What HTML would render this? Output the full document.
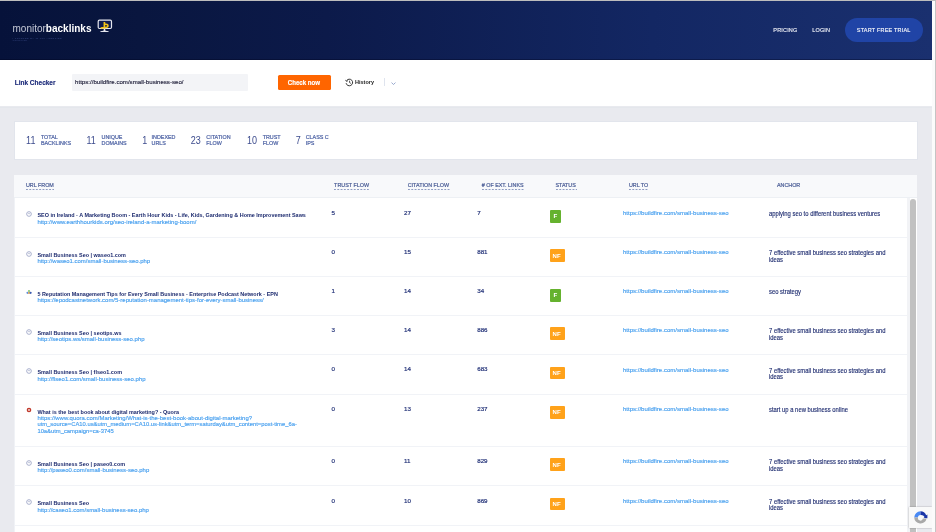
<!DOCTYPE html>
<html><head><meta charset="utf-8"><style>
*{margin:0;padding:0;box-sizing:border-box}
html,body{width:936px;height:532px;overflow:hidden;background:#e9eaef;font-family:"Liberation Sans",sans-serif}
.t{position:absolute;white-space:nowrap;line-height:1}
.a{position:absolute}
</style></head><body><div id="root" style="position:absolute;left:0;top:0;width:936px;height:532px;overflow:hidden;will-change:transform">
<div class="a" style="left:0;top:0;width:936px;height:1px;background:#bdbdbd"></div>
<div class="a" style="left:0;top:1px;width:932px;height:59px;background:linear-gradient(90deg,#06123a 0%,#09163f 15%,#0c1a4a 35%,#132763 70%,#1a306f 100%)"></div>
<div class="a" style="left:0;top:58.6px;width:932px;height:1.4px;background:rgba(0,4,30,.35)"></div>
<div class="t" style="left:12.50px;top:23.93px;font-size:10px;color:#fff;font-weight:400;"><span style="color:#c4c8d6">monitor</span><span style="font-weight:700;color:#fff">backlinks</span></div>

<div class="t" style="left:12.50px;top:37.45px;font-size:2.3px;color:#3d4d88;font-weight:400;letter-spacing:0.5px">I TRUSTED BY 11,000 AGENCIES</div>

<div class="t" style="left:12.50px;top:39.59px;font-size:1.9px;color:#34447e;font-weight:400;letter-spacing:0.3px">WORLDWIDE</div>

<svg class="a" style="left:97px;top:19px" width="16" height="14" viewBox="0 0 16 14">
<rect x="1.2" y="1.2" width="13.3" height="8.3" rx="1.2" fill="#0e1d50" stroke="#e6e7ee" stroke-width="1.2"/>
<path d="M6.9 9.6 L8.1 9.6 L8.5 11.7 L11.6 12.2 L11.6 12.9 L3.4 12.9 L3.4 12.2 L6.5 11.7 Z" fill="#e6e7ee"/>
<path d="M7.4 3.0 L7.4 8.7 M7.4 5.5 C 12.0 4.2, 12.2 9.0, 7.4 8.7 L 3.6 9.0" stroke="#f2c318" stroke-width="1.7" fill="none"/>
</svg>
<div class="t" style="left:773.30px;top:27.84px;font-size:5.5px;color:#e8ebf3;font-weight:400;letter-spacing:0.18px;-webkit-text-stroke:0.15px #e8ebf3">PRICING</div>

<div class="t" style="left:812.20px;top:27.84px;font-size:5.5px;color:#e8ebf3;font-weight:400;letter-spacing:0.18px;-webkit-text-stroke:0.15px #e8ebf3">LOGIN</div>

<div class="a" style="left:845px;top:18.3px;width:78px;height:23.6px;border-radius:12px;background:#2044a6"></div>
<div class="t" style="left:856.80px;top:27.84px;font-size:5.5px;color:#f2f4fa;font-weight:400;letter-spacing:0.2px;-webkit-text-stroke:0.15px #f2f4fa">START FREE TRIAL</div>

<div class="a" style="left:0;top:60px;width:932px;height:46px;background:#fff"></div>
<div class="t" style="left:14.70px;top:79.50px;font-size:6.5px;color:#1a2978;font-weight:700;transform:scaleY(1.12);transform-origin:0 5.50px;-webkit-text-stroke:0.12px #1a2978">Link Checker</div>

<div class="a" style="left:72px;top:74px;width:176px;height:16.5px;background:#f3f4f7;border-radius:1px"></div>
<div class="t" style="left:75.10px;top:78.84px;font-size:6.1px;color:#25253f;font-weight:400;-webkit-text-stroke:0.15px #25253f">https://buildfire.com/small-business-seo/</div>

<div class="a" style="left:277.6px;top:74.8px;width:53.2px;height:15.7px;background:#ff6500;border-radius:1.5px"></div>
<div class="t" style="left:287.80px;top:80.04px;font-size:6.1px;color:#fff;font-weight:700;transform:scaleY(1.25);transform-origin:0 5.16px;-webkit-text-stroke:0.15px #fff">Check now</div>

<svg class="a" style="left:345px;top:78px" width="9" height="9" viewBox="0 0 9 9">
<path d="M1.6 2.6 A3.3 3.3 0 1 1 1.1 5.2" fill="none" stroke="#2a2a2a" stroke-width="0.95"/>
<path d="M0.5 1.9 L1.5 3.4 L3.0 2.6" fill="none" stroke="#2a2a2a" stroke-width="0.85"/>
<path d="M4.6 2.7 L4.6 4.6 L5.8 5.4" fill="none" stroke="#2a2a2a" stroke-width="0.85"/>
</svg>
<div class="t" style="left:355.00px;top:80.34px;font-size:5.5px;color:#222;font-weight:700;transform:scaleY(1.1);transform-origin:0 4.66px;">History</div>

<div class="a" style="left:384px;top:78.4px;width:1px;height:8px;background:#dfe4ee"></div>
<svg class="a" style="left:390.5px;top:82.3px" width="5" height="3.4" viewBox="0 0 5 3.4"><path d="M0.5 0.6 L2.5 2.5 L4.5 0.6" fill="none" stroke="#7f93c2" stroke-width="0.8"/></svg>
<div class="a" style="left:0;top:107px;width:932px;height:1px;background:#e4e7ec"></div>
<div class="a" style="left:13.5px;top:121px;width:904.5px;height:38.5px;background:#fff;border:1px solid #e2e5ec"></div>
<div class="t" style="left:26.10px;top:136.88px;font-size:9px;color:#3c4b8d;font-weight:400;transform:scaleY(1.12);transform-origin:0 7.62px;">11</div>

<div class="t" style="left:40.90px;top:135.23px;font-size:5.4px;color:#4e63a4;font-weight:400;-webkit-text-stroke:0.2px #4e63a4">TOTAL</div>

<div class="t" style="left:40.90px;top:141.03px;font-size:5.4px;color:#4e63a4;font-weight:400;-webkit-text-stroke:0.2px #4e63a4">BACKLINKS</div>

<div class="t" style="left:86.40px;top:136.88px;font-size:9px;color:#3c4b8d;font-weight:400;transform:scaleY(1.12);transform-origin:0 7.62px;">11</div>

<div class="t" style="left:101.50px;top:135.23px;font-size:5.4px;color:#4e63a4;font-weight:400;-webkit-text-stroke:0.2px #4e63a4">UNIQUE</div>

<div class="t" style="left:101.50px;top:141.03px;font-size:5.4px;color:#4e63a4;font-weight:400;-webkit-text-stroke:0.2px #4e63a4">DOMAINS</div>

<div class="t" style="left:142.20px;top:136.88px;font-size:9px;color:#3c4b8d;font-weight:400;transform:scaleY(1.12);transform-origin:0 7.62px;">1</div>

<div class="t" style="left:151.50px;top:135.23px;font-size:5.4px;color:#4e63a4;font-weight:400;-webkit-text-stroke:0.2px #4e63a4">INDEXED</div>

<div class="t" style="left:151.50px;top:141.03px;font-size:5.4px;color:#4e63a4;font-weight:400;-webkit-text-stroke:0.2px #4e63a4">URLS</div>

<div class="t" style="left:190.80px;top:136.88px;font-size:9px;color:#3c4b8d;font-weight:400;transform:scaleY(1.12);transform-origin:0 7.62px;">23</div>

<div class="t" style="left:206.30px;top:135.23px;font-size:5.4px;color:#4e63a4;font-weight:400;-webkit-text-stroke:0.2px #4e63a4">CITATION</div>

<div class="t" style="left:206.30px;top:141.03px;font-size:5.4px;color:#4e63a4;font-weight:400;-webkit-text-stroke:0.2px #4e63a4">FLOW</div>

<div class="t" style="left:246.90px;top:136.88px;font-size:9px;color:#3c4b8d;font-weight:400;transform:scaleY(1.12);transform-origin:0 7.62px;">10</div>

<div class="t" style="left:262.70px;top:135.23px;font-size:5.4px;color:#4e63a4;font-weight:400;-webkit-text-stroke:0.2px #4e63a4">TRUST</div>

<div class="t" style="left:262.70px;top:141.03px;font-size:5.4px;color:#4e63a4;font-weight:400;-webkit-text-stroke:0.2px #4e63a4">FLOW</div>

<div class="t" style="left:295.80px;top:136.88px;font-size:9px;color:#3c4b8d;font-weight:400;transform:scaleY(1.12);transform-origin:0 7.62px;">7</div>

<div class="t" style="left:305.70px;top:135.23px;font-size:5.4px;color:#4e63a4;font-weight:400;-webkit-text-stroke:0.2px #4e63a4">CLASS C</div>

<div class="t" style="left:305.70px;top:141.03px;font-size:5.4px;color:#4e63a4;font-weight:400;-webkit-text-stroke:0.2px #4e63a4">IPS</div>

<div class="a" style="left:14px;top:175px;width:903px;height:360px;background:#fff"></div>
<div class="a" style="left:14px;top:175px;width:903px;height:23px;background:#f8f9fb;border-bottom:1px solid #edf0f4"></div>
<div class="t" style="left:25.90px;top:183.03px;font-size:5.4px;color:#4a5d96;font-weight:400;-webkit-text-stroke:0.2px #4a5d96">URL FROM</div>

<svg class="a" style="left:26.2px;top:189px" width="28.0" height="1.4"><line x1="0" y1="0.7" x2="28.0" y2="0.7" stroke="#7586b4" stroke-width="1" stroke-dasharray="1.9 1.4"/></svg>
<div class="t" style="left:334.10px;top:183.03px;font-size:5.4px;color:#4a5d96;font-weight:400;-webkit-text-stroke:0.2px #4a5d96">TRUST FLOW</div>

<svg class="a" style="left:334.4px;top:189px" width="34.8" height="1.4"><line x1="0" y1="0.7" x2="34.8" y2="0.7" stroke="#7586b4" stroke-width="1" stroke-dasharray="1.9 1.4"/></svg>
<div class="t" style="left:407.70px;top:183.03px;font-size:5.4px;color:#4a5d96;font-weight:400;-webkit-text-stroke:0.2px #4a5d96">CITATION FLOW</div>

<svg class="a" style="left:408.0px;top:189px" width="42.6" height="1.4"><line x1="0" y1="0.7" x2="42.6" y2="0.7" stroke="#7586b4" stroke-width="1" stroke-dasharray="1.9 1.4"/></svg>
<div class="t" style="left:481.70px;top:183.03px;font-size:5.4px;color:#4a5d96;font-weight:400;-webkit-text-stroke:0.2px #4a5d96"># OF EXT. LINKS</div>

<svg class="a" style="left:482.0px;top:189px" width="42.7" height="1.4"><line x1="0" y1="0.7" x2="42.7" y2="0.7" stroke="#7586b4" stroke-width="1" stroke-dasharray="1.9 1.4"/></svg>
<div class="t" style="left:555.40px;top:183.03px;font-size:5.4px;color:#4a5d96;font-weight:400;-webkit-text-stroke:0.2px #4a5d96">STATUS</div>

<svg class="a" style="left:555.7px;top:189px" width="21.6" height="1.4"><line x1="0" y1="0.7" x2="21.6" y2="0.7" stroke="#7586b4" stroke-width="1" stroke-dasharray="1.9 1.4"/></svg>
<div class="t" style="left:628.90px;top:183.03px;font-size:5.4px;color:#4a5d96;font-weight:400;-webkit-text-stroke:0.2px #4a5d96">URL TO</div>

<svg class="a" style="left:629.2px;top:189px" width="19.6" height="1.4"><line x1="0" y1="0.7" x2="19.6" y2="0.7" stroke="#7586b4" stroke-width="1" stroke-dasharray="1.9 1.4"/></svg>
<div class="t" style="left:776.90px;top:183.03px;font-size:5.4px;color:#4a5d96;font-weight:400;-webkit-text-stroke:0.2px #4a5d96">ANCHOR</div>

<div class="a" style="left:14px;top:237.0px;width:893px;height:1px;background:#f1f3f7"></div>
<svg class="a" style="left:26px;top:211.2px" width="6" height="6" viewBox="0 0 6 6"><circle cx="3" cy="3" r="2.35" fill="none" stroke="#8f98bd" stroke-width="0.75"/><path d="M1.6 2.3 L3 1.7 L4.3 2.5 L3.1 3.5 Z" fill="#c3c8dc"/></svg>
<div class="t" style="left:37.40px;top:213.49px;font-size:5.45px;color:#1c2a6e;font-weight:700;transform:scaleY(1.1);transform-origin:0 4.61px;">SEO in Ireland - A Marketing Boom - Earth Hour Kids - Life, Kids, Gardening &amp; Home Improvement Saws</div>

<div class="t" style="left:37.40px;top:218.84px;font-size:5.98px;color:#4aa1ef;font-weight:400;-webkit-text-stroke:0.15px #4aa1ef">http://www.earthhourkids.org/seo-ireland-a-marketing-boom/</div>

<div class="t" style="left:331.60px;top:209.65px;font-size:6.2px;color:#26357a;font-weight:400;-webkit-text-stroke:0.2px #26357a">5</div>

<div class="t" style="left:404.00px;top:209.65px;font-size:6.2px;color:#26357a;font-weight:400;-webkit-text-stroke:0.2px #26357a">27</div>

<div class="t" style="left:477.20px;top:209.65px;font-size:6.2px;color:#26357a;font-weight:400;-webkit-text-stroke:0.2px #26357a">7</div>

<div class="a" style="left:550px;top:210.0px;width:11px;height:13.4px;background:#65b22e;border-radius:1px"></div>
<div class="t" style="left:553.60px;top:213.35px;font-size:6.2px;color:#fff;font-weight:700;">F</div>

<div class="t" style="left:623.00px;top:209.89px;font-size:6.04px;color:#4aa1ef;font-weight:400;-webkit-text-stroke:0.15px #4aa1ef">https://buildfire.com/small-business-seo</div>

<div class="t" style="left:769.00px;top:211.72px;font-size:5.88px;color:#1f2d70;font-weight:400;transform:scaleY(1.15);transform-origin:0 4.98px;-webkit-text-stroke:0.12px #1f2d70">applying seo to different business ventures</div>

<div class="a" style="left:14px;top:276.0px;width:893px;height:1px;background:#f1f3f7"></div>
<svg class="a" style="left:26px;top:250.7px" width="6" height="6" viewBox="0 0 6 6"><circle cx="3" cy="3" r="2.35" fill="none" stroke="#8f98bd" stroke-width="0.75"/><path d="M1.6 2.3 L3 1.7 L4.3 2.5 L3.1 3.5 Z" fill="#c3c8dc"/></svg>
<div class="t" style="left:37.40px;top:252.99px;font-size:5.45px;color:#1c2a6e;font-weight:700;transform:scaleY(1.1);transform-origin:0 4.61px;">Small Business Seo | waseo1.com</div>

<div class="t" style="left:37.40px;top:258.34px;font-size:5.98px;color:#4aa1ef;font-weight:400;-webkit-text-stroke:0.15px #4aa1ef">http://waseo1.com/small-business-seo.php</div>

<div class="t" style="left:331.60px;top:249.15px;font-size:6.2px;color:#26357a;font-weight:400;-webkit-text-stroke:0.2px #26357a">0</div>

<div class="t" style="left:404.00px;top:249.15px;font-size:6.2px;color:#26357a;font-weight:400;-webkit-text-stroke:0.2px #26357a">15</div>

<div class="t" style="left:477.20px;top:249.15px;font-size:6.2px;color:#26357a;font-weight:400;-webkit-text-stroke:0.2px #26357a">881</div>

<div class="a" style="left:550.3px;top:249.3px;width:14.7px;height:12.8px;background:#ffa21a;border-radius:1px"></div>
<div class="t" style="left:552.60px;top:252.62px;font-size:6.0px;color:#fff;font-weight:700;">NF</div>

<div class="t" style="left:623.00px;top:249.39px;font-size:6.04px;color:#4aa1ef;font-weight:400;-webkit-text-stroke:0.15px #4aa1ef">https://buildfire.com/small-business-seo</div>

<div class="t" style="left:769.00px;top:251.22px;font-size:5.88px;color:#1f2d70;font-weight:400;transform:scaleY(1.15);transform-origin:0 4.98px;-webkit-text-stroke:0.12px #1f2d70">7 effective small business seo strategies and</div>

<div class="t" style="left:769.00px;top:257.62px;font-size:5.88px;color:#1f2d70;font-weight:400;transform:scaleY(1.15);transform-origin:0 4.98px;-webkit-text-stroke:0.12px #1f2d70">ideas</div>

<div class="a" style="left:14px;top:314.9px;width:893px;height:1px;background:#f1f3f7"></div>
<svg class="a" style="left:26px;top:288.8px" width="6" height="6" viewBox="0 0 6 6"><circle cx="1.5" cy="3.8" r="1.1" fill="#5a8ee0"/><circle cx="3" cy="2" r="1" fill="#7cc36a"/><circle cx="3" cy="4" r="1" fill="#f0a040"/><circle cx="4.6" cy="3.8" r="1.1" fill="#3a5ab0"/></svg>
<div class="t" style="left:37.40px;top:291.99px;font-size:5.45px;color:#1c2a6e;font-weight:700;transform:scaleY(1.1);transform-origin:0 4.61px;">5 Reputation Management Tips for Every Small Business - Enterprise Podcast Network - EPN</div>

<div class="t" style="left:37.40px;top:297.34px;font-size:5.98px;color:#4aa1ef;font-weight:400;-webkit-text-stroke:0.15px #4aa1ef">https://epodcastnetwork.com/5-reputation-management-tips-for-every-small-business/</div>

<div class="t" style="left:331.60px;top:288.15px;font-size:6.2px;color:#26357a;font-weight:400;-webkit-text-stroke:0.2px #26357a">1</div>

<div class="t" style="left:404.00px;top:288.15px;font-size:6.2px;color:#26357a;font-weight:400;-webkit-text-stroke:0.2px #26357a">14</div>

<div class="t" style="left:477.20px;top:288.15px;font-size:6.2px;color:#26357a;font-weight:400;-webkit-text-stroke:0.2px #26357a">34</div>

<div class="a" style="left:550px;top:288.5px;width:11px;height:13.4px;background:#65b22e;border-radius:1px"></div>
<div class="t" style="left:553.60px;top:291.85px;font-size:6.2px;color:#fff;font-weight:700;">F</div>

<div class="t" style="left:623.00px;top:288.39px;font-size:6.04px;color:#4aa1ef;font-weight:400;-webkit-text-stroke:0.15px #4aa1ef">https://buildfire.com/small-business-seo</div>

<div class="t" style="left:769.00px;top:290.22px;font-size:5.88px;color:#1f2d70;font-weight:400;transform:scaleY(1.15);transform-origin:0 4.98px;-webkit-text-stroke:0.12px #1f2d70">seo strategy</div>

<div class="a" style="left:14px;top:354.3px;width:893px;height:1px;background:#f1f3f7"></div>
<svg class="a" style="left:26px;top:328.6px" width="6" height="6" viewBox="0 0 6 6"><circle cx="3" cy="3" r="2.35" fill="none" stroke="#8f98bd" stroke-width="0.75"/><path d="M1.6 2.3 L3 1.7 L4.3 2.5 L3.1 3.5 Z" fill="#c3c8dc"/></svg>
<div class="t" style="left:37.40px;top:330.89px;font-size:5.45px;color:#1c2a6e;font-weight:700;transform:scaleY(1.1);transform-origin:0 4.61px;">Small Business Seo | seotips.ws</div>

<div class="t" style="left:37.40px;top:336.24px;font-size:5.98px;color:#4aa1ef;font-weight:400;-webkit-text-stroke:0.15px #4aa1ef">http://seotips.ws/small-business-seo.php</div>

<div class="t" style="left:331.60px;top:327.05px;font-size:6.2px;color:#26357a;font-weight:400;-webkit-text-stroke:0.2px #26357a">3</div>

<div class="t" style="left:404.00px;top:327.05px;font-size:6.2px;color:#26357a;font-weight:400;-webkit-text-stroke:0.2px #26357a">14</div>

<div class="t" style="left:477.20px;top:327.05px;font-size:6.2px;color:#26357a;font-weight:400;-webkit-text-stroke:0.2px #26357a">886</div>

<div class="a" style="left:550.3px;top:327.2px;width:14.7px;height:12.8px;background:#ffa21a;border-radius:1px"></div>
<div class="t" style="left:552.60px;top:330.52px;font-size:6.0px;color:#fff;font-weight:700;">NF</div>

<div class="t" style="left:623.00px;top:327.29px;font-size:6.04px;color:#4aa1ef;font-weight:400;-webkit-text-stroke:0.15px #4aa1ef">https://buildfire.com/small-business-seo</div>

<div class="t" style="left:769.00px;top:329.12px;font-size:5.88px;color:#1f2d70;font-weight:400;transform:scaleY(1.15);transform-origin:0 4.98px;-webkit-text-stroke:0.12px #1f2d70">7 effective small business seo strategies and</div>

<div class="t" style="left:769.00px;top:335.52px;font-size:5.88px;color:#1f2d70;font-weight:400;transform:scaleY(1.15);transform-origin:0 4.98px;-webkit-text-stroke:0.12px #1f2d70">ideas</div>

<div class="a" style="left:14px;top:393.8px;width:893px;height:1px;background:#f1f3f7"></div>
<svg class="a" style="left:26px;top:368.0px" width="6" height="6" viewBox="0 0 6 6"><circle cx="3" cy="3" r="2.35" fill="none" stroke="#8f98bd" stroke-width="0.75"/><path d="M1.6 2.3 L3 1.7 L4.3 2.5 L3.1 3.5 Z" fill="#c3c8dc"/></svg>
<div class="t" style="left:37.40px;top:370.29px;font-size:5.45px;color:#1c2a6e;font-weight:700;transform:scaleY(1.1);transform-origin:0 4.61px;">Small Business Seo | flseo1.com</div>

<div class="t" style="left:37.40px;top:375.64px;font-size:5.98px;color:#4aa1ef;font-weight:400;-webkit-text-stroke:0.15px #4aa1ef">http://flseo1.com/small-business-seo.php</div>

<div class="t" style="left:331.60px;top:366.45px;font-size:6.2px;color:#26357a;font-weight:400;-webkit-text-stroke:0.2px #26357a">0</div>

<div class="t" style="left:404.00px;top:366.45px;font-size:6.2px;color:#26357a;font-weight:400;-webkit-text-stroke:0.2px #26357a">14</div>

<div class="t" style="left:477.20px;top:366.45px;font-size:6.2px;color:#26357a;font-weight:400;-webkit-text-stroke:0.2px #26357a">683</div>

<div class="a" style="left:550.3px;top:366.6px;width:14.7px;height:12.8px;background:#ffa21a;border-radius:1px"></div>
<div class="t" style="left:552.60px;top:369.92px;font-size:6.0px;color:#fff;font-weight:700;">NF</div>

<div class="t" style="left:623.00px;top:366.69px;font-size:6.04px;color:#4aa1ef;font-weight:400;-webkit-text-stroke:0.15px #4aa1ef">https://buildfire.com/small-business-seo</div>

<div class="t" style="left:769.00px;top:368.52px;font-size:5.88px;color:#1f2d70;font-weight:400;transform:scaleY(1.15);transform-origin:0 4.98px;-webkit-text-stroke:0.12px #1f2d70">7 effective small business seo strategies and</div>

<div class="t" style="left:769.00px;top:374.92px;font-size:5.88px;color:#1f2d70;font-weight:400;transform:scaleY(1.15);transform-origin:0 4.98px;-webkit-text-stroke:0.12px #1f2d70">ideas</div>

<div class="a" style="left:14px;top:446.0px;width:893px;height:1px;background:#f1f3f7"></div>
<svg class="a" style="left:26px;top:406.7px" width="6" height="6" viewBox="0 0 6 6"><circle cx="3" cy="3" r="2.3" fill="#c0392b"/><circle cx="3" cy="2.9" r="1.0" fill="#f3d5d3"/></svg>
<div class="t" style="left:37.40px;top:409.79px;font-size:5.45px;color:#1c2a6e;font-weight:700;transform:scaleY(1.1);transform-origin:0 4.61px;">What is the best book about digital marketing? - Quora</div>

<div class="t" style="left:37.40px;top:415.14px;font-size:5.98px;color:#4aa1ef;font-weight:400;-webkit-text-stroke:0.15px #4aa1ef">https://www.quora.com/Marketing/What-is-the-best-book-about-digital-marketing?</div>

<div class="t" style="left:37.40px;top:422.06px;font-size:5.84px;color:#4aa1ef;font-weight:400;-webkit-text-stroke:0.15px #4aa1ef">utm_source=CA10.us&amp;utm_medium=CA10.us-link&amp;utm_term=saturday&amp;utm_content=post-time_6a-</div>

<div class="t" style="left:37.40px;top:428.86px;font-size:5.84px;color:#4aa1ef;font-weight:400;-webkit-text-stroke:0.15px #4aa1ef">10a&amp;utm_campaign=ca-3745</div>

<div class="t" style="left:331.60px;top:405.95px;font-size:6.2px;color:#26357a;font-weight:400;-webkit-text-stroke:0.2px #26357a">0</div>

<div class="t" style="left:404.00px;top:405.95px;font-size:6.2px;color:#26357a;font-weight:400;-webkit-text-stroke:0.2px #26357a">13</div>

<div class="t" style="left:477.20px;top:405.95px;font-size:6.2px;color:#26357a;font-weight:400;-webkit-text-stroke:0.2px #26357a">237</div>

<div class="a" style="left:550.3px;top:406.1px;width:14.7px;height:12.8px;background:#ffa21a;border-radius:1px"></div>
<div class="t" style="left:552.60px;top:409.42px;font-size:6.0px;color:#fff;font-weight:700;">NF</div>

<div class="t" style="left:623.00px;top:406.19px;font-size:6.04px;color:#4aa1ef;font-weight:400;-webkit-text-stroke:0.15px #4aa1ef">https://buildfire.com/small-business-seo</div>

<div class="t" style="left:769.00px;top:408.02px;font-size:5.88px;color:#1f2d70;font-weight:400;transform:scaleY(1.15);transform-origin:0 4.98px;-webkit-text-stroke:0.12px #1f2d70">start up a new business online</div>

<div class="a" style="left:14px;top:485.4px;width:893px;height:1px;background:#f1f3f7"></div>
<svg class="a" style="left:26px;top:459.7px" width="6" height="6" viewBox="0 0 6 6"><circle cx="3" cy="3" r="2.35" fill="none" stroke="#8f98bd" stroke-width="0.75"/><path d="M1.6 2.3 L3 1.7 L4.3 2.5 L3.1 3.5 Z" fill="#c3c8dc"/></svg>
<div class="t" style="left:37.40px;top:461.99px;font-size:5.45px;color:#1c2a6e;font-weight:700;transform:scaleY(1.1);transform-origin:0 4.61px;">Small Business Seo | paseo0.com</div>

<div class="t" style="left:37.40px;top:467.34px;font-size:5.98px;color:#4aa1ef;font-weight:400;-webkit-text-stroke:0.15px #4aa1ef">http://paseo0.com/small-business-seo.php</div>

<div class="t" style="left:331.60px;top:458.15px;font-size:6.2px;color:#26357a;font-weight:400;-webkit-text-stroke:0.2px #26357a">0</div>

<div class="t" style="left:404.00px;top:458.15px;font-size:6.2px;color:#26357a;font-weight:400;-webkit-text-stroke:0.2px #26357a">11</div>

<div class="t" style="left:477.20px;top:458.15px;font-size:6.2px;color:#26357a;font-weight:400;-webkit-text-stroke:0.2px #26357a">829</div>

<div class="a" style="left:550.3px;top:458.3px;width:14.7px;height:12.8px;background:#ffa21a;border-radius:1px"></div>
<div class="t" style="left:552.60px;top:461.62px;font-size:6.0px;color:#fff;font-weight:700;">NF</div>

<div class="t" style="left:623.00px;top:458.39px;font-size:6.04px;color:#4aa1ef;font-weight:400;-webkit-text-stroke:0.15px #4aa1ef">https://buildfire.com/small-business-seo</div>

<div class="t" style="left:769.00px;top:460.22px;font-size:5.88px;color:#1f2d70;font-weight:400;transform:scaleY(1.15);transform-origin:0 4.98px;-webkit-text-stroke:0.12px #1f2d70">7 effective small business seo strategies and</div>

<div class="t" style="left:769.00px;top:466.62px;font-size:5.88px;color:#1f2d70;font-weight:400;transform:scaleY(1.15);transform-origin:0 4.98px;-webkit-text-stroke:0.12px #1f2d70">ideas</div>

<div class="a" style="left:14px;top:524.8px;width:893px;height:1px;background:#f1f3f7"></div>
<svg class="a" style="left:26px;top:499.1px" width="6" height="6" viewBox="0 0 6 6"><circle cx="3" cy="3" r="2.35" fill="none" stroke="#8f98bd" stroke-width="0.75"/><path d="M1.6 2.3 L3 1.7 L4.3 2.5 L3.1 3.5 Z" fill="#c3c8dc"/></svg>
<div class="t" style="left:37.40px;top:501.39px;font-size:5.45px;color:#1c2a6e;font-weight:700;transform:scaleY(1.1);transform-origin:0 4.61px;">Small Business Seo</div>

<div class="t" style="left:37.40px;top:506.74px;font-size:5.98px;color:#4aa1ef;font-weight:400;-webkit-text-stroke:0.15px #4aa1ef">http://caseo1.com/small-business-seo.php</div>

<div class="t" style="left:331.60px;top:497.55px;font-size:6.2px;color:#26357a;font-weight:400;-webkit-text-stroke:0.2px #26357a">0</div>

<div class="t" style="left:404.00px;top:497.55px;font-size:6.2px;color:#26357a;font-weight:400;-webkit-text-stroke:0.2px #26357a">10</div>

<div class="t" style="left:477.20px;top:497.55px;font-size:6.2px;color:#26357a;font-weight:400;-webkit-text-stroke:0.2px #26357a">869</div>

<div class="a" style="left:550.3px;top:497.7px;width:14.7px;height:12.8px;background:#ffa21a;border-radius:1px"></div>
<div class="t" style="left:552.60px;top:501.02px;font-size:6.0px;color:#fff;font-weight:700;">NF</div>

<div class="t" style="left:623.00px;top:497.79px;font-size:6.04px;color:#4aa1ef;font-weight:400;-webkit-text-stroke:0.15px #4aa1ef">https://buildfire.com/small-business-seo</div>

<div class="t" style="left:769.00px;top:499.62px;font-size:5.88px;color:#1f2d70;font-weight:400;transform:scaleY(1.15);transform-origin:0 4.98px;-webkit-text-stroke:0.12px #1f2d70">7 effective small business seo strategies and</div>

<div class="t" style="left:769.00px;top:506.02px;font-size:5.88px;color:#1f2d70;font-weight:400;transform:scaleY(1.15);transform-origin:0 4.98px;-webkit-text-stroke:0.12px #1f2d70">ideas</div>

<div class="a" style="left:14px;top:198px;width:1.3px;height:334px;background:#f0f2f6"></div>
<div class="a" style="left:907px;top:198px;width:2.5px;height:334px;background:#f2f3f6"></div>
<div class="a" style="left:909.5px;top:198px;width:7.5px;height:334px;background:#fff"></div>
<div class="a" style="left:910.2px;top:199px;width:5.4px;height:340px;background:#c1c1c1;border-radius:3px"></div>
<div class="a" style="left:908.5px;top:507px;width:23.5px;height:21px;background:#f9f9f9;box-shadow:0 0 1.5px rgba(0,0,0,.35)"></div>
<svg class="a" style="left:913px;top:510px" width="15" height="15" viewBox="0 0 15 15">
<path d="M1.2 7.6 A6.3 6.3 0 0 1 7.5 1.3 L7.5 5.0 A2.5 2.5 0 0 0 5.0 7.6 Z" fill="#4a8af4"/>
<path d="M7.5 1.3 A6.3 6.3 0 0 1 13.2 5.2 L14.4 4.6 L14.4 8.2 L10.6 8.0 L11.6 7.1 A4.1 4.1 0 0 0 7.5 5.0 Z" fill="#1a36a8"/>
<path d="M13.6 8.6 A6.3 6.3 0 0 1 1.2 7.6 L5.0 7.6 A2.5 2.5 0 0 0 9.9 8.6 Z" fill="#a9a9a9"/>
</svg>
<div class="a" style="left:932px;top:1px;width:3px;height:531px;background:#fbfbfb"></div>
<div class="a" style="left:935px;top:1px;width:1px;height:531px;background:#c4c4c4"></div>
</div></body></html>
